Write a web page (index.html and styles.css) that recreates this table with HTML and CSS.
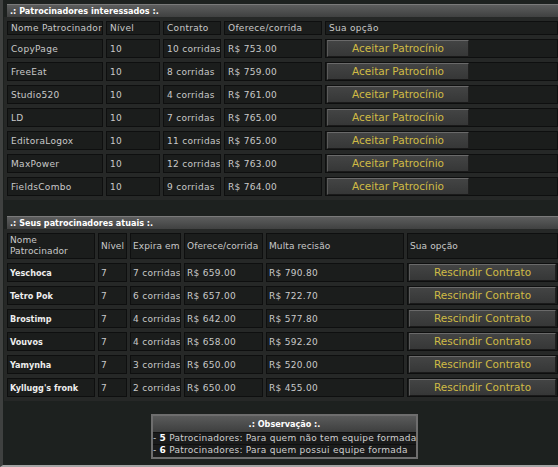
FILE: index.html
```html
<!DOCTYPE html>
<html lang="pt">
<head>
<meta charset="utf-8">
<title>Patrocinadores</title>
<link rel="stylesheet" href="styles.css">
</head>
<body>
<div class="page">
  <section class="panel offers">
    <div class="bar">.: Patrocinadores interessados :.</div>
    <table class="grid">
      <colgroup>
        <col class="c-name"><col class="c-lvl"><col class="c-ct"><col class="c-of"><col>
      </colgroup>
      <thead>
        <tr><th>Nome Patrocinador</th><th>Nível</th><th>Contrato</th><th>Oferece/corrida</th><th>Sua opção</th></tr>
      </thead>
      <tbody>
        <tr><td>CopyPage</td><td>10</td><td>10 corridas</td><td>R$ 753.00</td><td class="act"><button class="btn accept">Aceitar Patrocínio</button></td></tr>
        <tr><td>FreeEat</td><td>10</td><td>8 corridas</td><td>R$ 759.00</td><td class="act"><button class="btn accept">Aceitar Patrocínio</button></td></tr>
        <tr><td>Studio520</td><td>10</td><td>4 corridas</td><td>R$ 761.00</td><td class="act"><button class="btn accept">Aceitar Patrocínio</button></td></tr>
        <tr><td>LD</td><td>10</td><td>7 corridas</td><td>R$ 765.00</td><td class="act"><button class="btn accept">Aceitar Patrocínio</button></td></tr>
        <tr><td>EditoraLogox</td><td>10</td><td>11 corridas</td><td>R$ 765.00</td><td class="act"><button class="btn accept">Aceitar Patrocínio</button></td></tr>
        <tr><td>MaxPower</td><td>10</td><td>12 corridas</td><td>R$ 763.00</td><td class="act"><button class="btn accept">Aceitar Patrocínio</button></td></tr>
        <tr><td>FieldsCombo</td><td>10</td><td>9 corridas</td><td>R$ 764.00</td><td class="act"><button class="btn accept">Aceitar Patrocínio</button></td></tr>
      </tbody>
    </table>
  </section>

  <section class="panel current">
    <div class="bar">.: Seus patrocinadores atuais :.</div>
    <table class="grid">
      <colgroup>
        <col class="d-name"><col class="d-lvl"><col class="d-exp"><col class="d-of"><col class="d-fine"><col>
      </colgroup>
      <thead>
        <tr class="tall"><th class="wrap">Nome<br>Patrocinador</th><th>Nível</th><th>Expira em</th><th>Oferece/corrida</th><th>Multa recisão</th><th>Sua opção</th></tr>
      </thead>
      <tbody>
        <tr><td class="nm">Yeschoca</td><td>7</td><td>7 corridas</td><td>R$ 659.00</td><td>R$ 790.80</td><td class="act"><button class="btn cancel">Rescindir Contrato</button></td></tr>
        <tr><td class="nm">Tetro Pok</td><td>7</td><td>6 corridas</td><td>R$ 657.00</td><td>R$ 722.70</td><td class="act"><button class="btn cancel">Rescindir Contrato</button></td></tr>
        <tr><td class="nm">Brostimp</td><td>7</td><td>4 corridas</td><td>R$ 642.00</td><td>R$ 577.80</td><td class="act"><button class="btn cancel">Rescindir Contrato</button></td></tr>
        <tr><td class="nm">Vouvos</td><td>7</td><td>4 corridas</td><td>R$ 658.00</td><td>R$ 592.20</td><td class="act"><button class="btn cancel">Rescindir Contrato</button></td></tr>
        <tr><td class="nm">Yamynha</td><td>7</td><td>3 corridas</td><td>R$ 650.00</td><td>R$ 520.00</td><td class="act"><button class="btn cancel">Rescindir Contrato</button></td></tr>
        <tr><td class="nm">Kyllugg's fronk</td><td>7</td><td>2 corridas</td><td>R$ 650.00</td><td>R$ 455.00</td><td class="act"><button class="btn cancel">Rescindir Contrato</button></td></tr>
      </tbody>
    </table>
  </section>

  <div class="note">
    <div class="note-head">.: Observação :.</div>
    <div class="note-line">- <b>5</b> Patrocinadores: Para quem não tem equipe formada</div>
    <div class="note-line">- <b>6</b> Patrocinadores: Para quem possui equipe formada</div>
  </div>
</div>
</body>
</html>
```

FILE: styles.css
```css
html, body {
  margin: 0;
  padding: 0;
  background: #1d211f;
  overflow: hidden;
}

.page {
  box-sizing: border-box;
  height: 467px;
  border-left: 3px solid #3f4140;
  border-bottom: 2px solid #a4a4a4;
  padding: 4px 0 0 4px;
  background: #1d211f;
  font-family: "DejaVu Sans", Verdana, sans-serif;
  font-size: 9px;
  letter-spacing: 0.3px;
  color: #c9c9c9;
  display: flex;
  flex-direction: column;
  overflow: hidden;
}

.panel.current {
  margin-top: 16px;
}

.bar {
  height: 13px;
  box-sizing: border-box;
  padding: 0 4px 0 3px;
  background: linear-gradient(#5c5d5d, #404141);
  border-top: 1px solid #7a7a7a;
  color: #ffffff;
  font-weight: bold;
  font-stretch: condensed;
  font-family: "DejaVu Sans Condensed", "DejaVu Sans", sans-serif;
  letter-spacing: 0;
  line-height: 12px;
  font-size: 9px;
}

.grid {
  width: calc(100% + 6px);
  margin-left: -3px;
  border-collapse: separate;
  border-spacing: 3px 4px;
  table-layout: fixed;
  background: #262827;
}

.grid th,
.grid td {
  box-sizing: border-box;
  background: #1b1d1c;
  border: 1px solid #0e0f0f;
  padding: 0 2px 0 3px;
  text-align: left;
  font-weight: normal;
  white-space: nowrap;
  overflow: hidden;
  vertical-align: middle;
}

.grid th {
  height: 14px;
  line-height: 12px;
}

.grid td {
  height: 19px;
  line-height: 16px;
}

.grid tr.tall th {
  height: 26px;
  line-height: 11px;
}

.grid tr.tall th.wrap {
  white-space: normal;
}

.grid td.act {
  padding: 0 1px;
}

.grid td.nm {
  font-weight: bold;
  font-family: "DejaVu Sans Condensed", "DejaVu Sans", sans-serif;
  font-stretch: condensed;
  color: #ededed;
  letter-spacing: 0;
}

.c-name { width: 96px; }
.c-lvl { width: 54px; }
.c-ct { width: 58px; }
.c-of { width: 98px; }

.d-name { width: 88px; }
.d-lvl { width: 29px; }
.d-exp { width: 51px; }
.d-of { width: 79px; }
.d-fine { width: 138px; }

.current .grid th,
.current .grid td {
  padding: 0 1px 0 2px;
}

.current .grid th {
  letter-spacing: 0.1px;
}

.current .grid td.act {
  padding: 0 1px;
}

.btn {
  display: block;
  box-sizing: border-box;
  height: 17px;
  padding: 0;
  margin: 0;
  background: linear-gradient(#434444, #363737);
  border: 1px solid;
  border-color: #6a6a6a #202020 #1a1a1a #5a5a5a;
  color: #d0bb45;
  font-family: "DejaVu Sans", Verdana, sans-serif;
  font-size: 10.5px;
  line-height: 15px;
  letter-spacing: 0;
  text-align: center;
}

.btn.accept {
  width: 142px;
}

.btn.cancel {
  width: 100%;
}

.note {
  align-self: center;
  margin-top: 13px;
  margin-left: 4px;
  width: 267px;
  box-sizing: border-box;
  border: 2px solid #6e6e6e;
  background: #1a1b1b;
}

.note-head {
  height: 16px;
  line-height: 16px;
  text-align: center;
  color: #ffffff;
  font-weight: bold;
  font-family: "DejaVu Sans Condensed", "DejaVu Sans", sans-serif;
  font-stretch: condensed;
  letter-spacing: 0;
  background: linear-gradient(#5a5b5b, #3e3f3f);
  border-bottom: 1px solid #101010;
}

.note-line {
  height: 11px;
  line-height: 11px;
  white-space: nowrap;
  color: #cfcfcf;
  letter-spacing: 0.25px;
  border-bottom: 1px solid #101010;
}

.note-line:last-child {
  height: 12px;
  border-bottom: 0;
}

.note-line b {
  color: #ffffff;
}
```
